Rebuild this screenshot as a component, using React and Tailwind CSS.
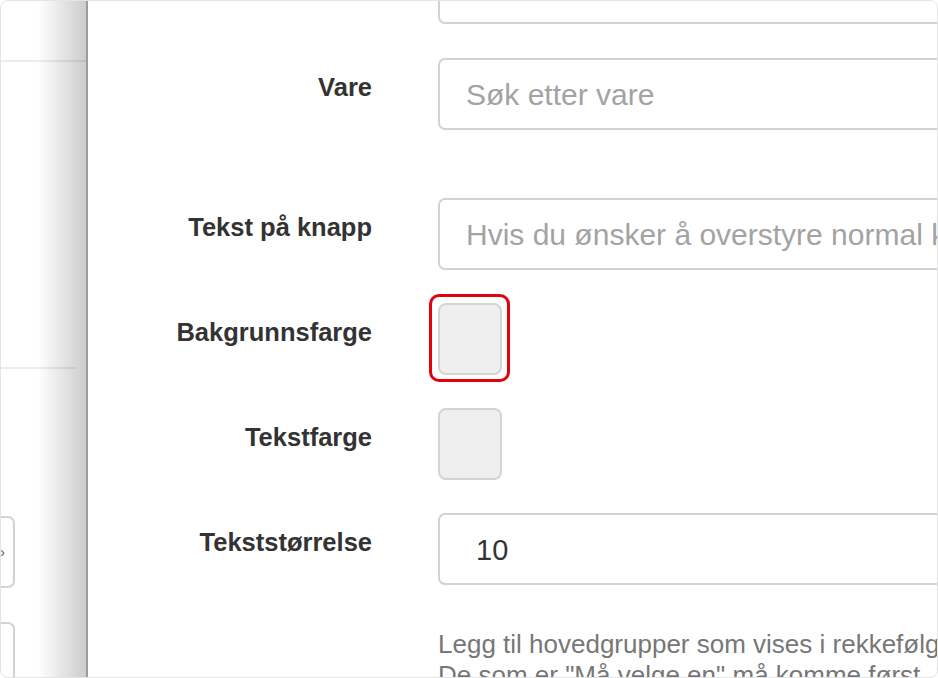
import React from 'react';

const font = "font-['Liberation_Sans',Arial,sans-serif]";

function Row({ label, top, children }) {
  return (
    <div className={`flex items-start ${top}`}>
      <label className="w-[284px] shrink-0 text-right pt-[14px] text-[25.5px] leading-[30px] font-bold text-[#333]">
        {label}
      </label>
      <div className="ml-[66px] shrink-0">{children}</div>
    </div>
  );
}

function Input({ placeholder, value, className = 'pl-[26px]' }) {
  return (
    <div className={`w-[560px] h-[72px] flex items-center rounded-[7px] border-2 border-[#d2d2d2] bg-white whitespace-nowrap overflow-hidden ${className}`}>
      {value ? (
        <span className="text-[29px] text-[#333] pt-[4px]">{value}</span>
      ) : (
        <span className="text-[30px] text-[#a3a3a3]">{placeholder}</span>
      )}
    </div>
  );
}

function Swatch({ marked }) {
  return (
    <div className="relative w-[64px] h-[72px]">
      <div className="w-full h-full rounded-[8px] border-2 border-[#d4d4d4] bg-[#efefef]" />
      {marked && (
        <div className="absolute -left-[9px] -right-[8px] -top-[9px] -bottom-[7px] rounded-[10px] border-[3px] border-[#e3000f]" />
      )}
    </div>
  );
}

export default function App() {
  return (
    <div className={`w-[938px] h-[678px] overflow-hidden rounded-[8px] border border-[#e4e4e4] bg-white flex ${font}`}>
      {/* page behind the dialog */}
      <aside className="relative w-[85px] shrink-0 flex flex-col">
        <div className="h-[61px] shrink-0 border-b-2 border-[#ececec]" />
        <div className="h-[307px] shrink-0 mr-[10px] border-b-2 border-[#ececec]" />
        <div className="mt-[147px] -ml-[62px] w-[76px] h-[72px] shrink-0 rounded-[7px] border-2 border-[#d2d2d2] flex items-center justify-end pr-[8px]">
          <span className="text-[14px] leading-none text-[#555]">›</span>
        </div>
        <div className="mt-[34px] -ml-[62px] w-[76px] h-[72px] shrink-0 rounded-[7px] border-2 border-[#d2d2d2]" />
        <div className="absolute inset-y-0 right-0 w-[48px] bg-linear-to-r from-black/0 to-black/20" />
      </aside>

      {/* dialog */}
      <main className="flex-1 min-w-0 border-l-2 border-[#9c9c9c] flex flex-col overflow-hidden">
        <div className="-mt-[49px] ml-[350px] shrink-0">
          <Input placeholder="" />
        </div>
        <Row label="Vare" top="mt-[34px]">
          <Input placeholder="Søk etter vare" />
        </Row>
        <Row label="Tekst på knapp" top="mt-[68px]">
          <Input placeholder="Hvis du ønsker å overstyre normal knappetekst" />
        </Row>
        <Row label="Bakgrunnsfarge" top="mt-[33px]">
          <Swatch marked />
        </Row>
        <Row label="Tekstfarge" top="mt-[33px]">
          <Swatch />
        </Row>
        <Row label="Tekststørrelse" top="mt-[33px]">
          <Input value="10" className="pl-[36px]" />
        </Row>
        <p className="mt-[44px] ml-[350px] w-[600px] shrink-0 text-[26px] leading-[31px] text-[#777] whitespace-nowrap">
          Legg til hovedgrupper som vises i rekkefølge på knappen.
          <br />
          De som er "Må velge en" må komme først.
        </p>
      </main>
    </div>
  );
}
